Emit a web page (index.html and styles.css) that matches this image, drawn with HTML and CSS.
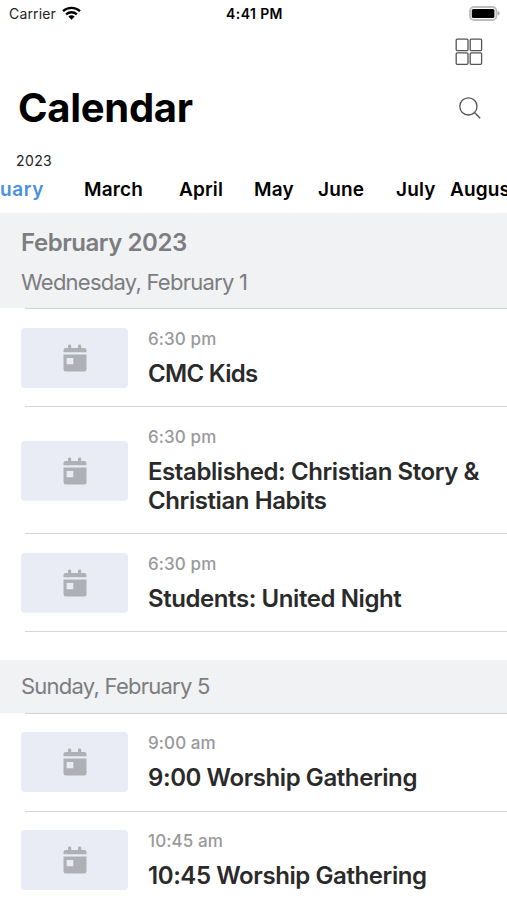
FILE: index.html
```html
<!DOCTYPE html>
<html lang="en">
<head>
<meta charset="utf-8">
<title>Calendar</title>
<link rel="stylesheet" href="styles.css">
</head>
<body>
<svg class="defs" width="0" height="0" aria-hidden="true">
  <symbol id="cal" viewBox="0 0 24 28">
    <path d="M0.5 8.3V6.2Q0.5 4 2.7 4H5V1.8Q5 .6 6.6 .6T8.2 1.8V4H15V1.8Q15 .6 16.6 .6T18.2 1.8V4H21.3Q23.5 4 23.5 6.2V8.3Z"/>
    <path fill-rule="evenodd" d="M.5 10.6H23.5V25.2Q23.5 27.4 21.3 27.4H2.7Q.5 27.4 .5 25.2ZM3.6 14V20.3H10.3V14Z"/>
  </symbol>
</svg>
<div class="status">
  <div class="network">
    <span class="carrier">Carrier</span>
    <svg class="wifi" width="19" height="14" viewBox="0 0 19 14"><g fill="none" stroke="#000" stroke-width="2.3"><path d="M1 5.2C5.7.7 13.3.7 18 5.2"/><path d="M4.1 8.4C7.2 5.5 11.8 5.5 14.9 8.4"/></g><path d="M6.3 10.6Q9.5 8 12.7 10.6L9.5 13.8Z"/></svg>
  </div>
  <span class="clock">4:41 PM</span>
  <svg class="battery" width="31" height="15" viewBox="0 0 31 15"><rect x="1" y="1" width="26.4" height="13" rx="4" fill="#fff" stroke="#bdbdbd" stroke-width="1.8"/><rect x="2.8" y="2.9" width="22.6" height="9.2" rx="1.6"/><path d="M28.6 5Q30.6 5.6 30.6 7.3T28.6 9.6Z" fill="#aaa"/></svg>
</div>
<div class="toolbar">
  <svg width="28" height="28" viewBox="0 0 28 28" fill="none" stroke="#555" stroke-width="1.3"><rect x="1.2" y="1.2" width="11.8" height="11.4" rx="1"/><rect x="15.2" y="1.2" width="11.4" height="11.4" rx="1"/><rect x="1.2" y="14.9" width="11.8" height="11.4" rx="1"/><rect x="15.2" y="14.9" width="11.4" height="11.4" rx="1"/></svg>
</div>
<div class="heading">
  <h1>Calendar</h1>
  <svg width="22" height="22" viewBox="0 0 22 22" fill="none" stroke="#555" stroke-width="1.3"><circle cx="9.4" cy="9.4" r="8.6"/><path d="M15.5 15.5L21.2 21.2"/></svg>
</div>
<div class="year"><span>2023</span></div>
<div class="months">
  <span class="active">February</span><span>March</span><span>April</span><span>May</span><span>June</span><span>July</span><span>August</span>
</div>
<section class="opening">
  <div class="band first">
    <h2>February 2023</h2>
    <p>Wednesday, February 1</p>
  </div>
  <div class="event">
    <div class="thumb"><svg width="24" height="28"><use href="#cal"/></svg></div>
    <div class="info"><span class="time">6:30 pm</span><span class="title tight">CMC Kids</span></div>
  </div>
  <div class="event">
    <div class="thumb"><svg width="24" height="28"><use href="#cal"/></svg></div>
    <div class="info"><span class="time">6:30 pm</span><span class="title">Established: Christian Story &amp;<br>Christian Habits</span></div>
  </div>
  <div class="event">
    <div class="thumb"><svg width="24" height="28"><use href="#cal"/></svg></div>
    <div class="info"><span class="time">6:30 pm</span><span class="title">Students: United Night</span></div>
  </div>
</section>
<section class="later">
  <div class="band">
    <p>Sunday, February 5</p>
  </div>
  <div class="event">
    <div class="thumb"><svg width="24" height="28"><use href="#cal"/></svg></div>
    <div class="info"><span class="time">9:00 am</span><span class="title">9:00 Worship Gathering</span></div>
  </div>
  <div class="event">
    <div class="thumb"><svg width="24" height="28"><use href="#cal"/></svg></div>
    <div class="info"><span class="time">10:45 am</span><span class="title">10:45 Worship Gathering</span></div>
  </div>
</section>
</body>
</html>
```

FILE: styles.css
```css
* { box-sizing: border-box; margin: 0; padding: 0; }
body { height: 900px; overflow: hidden; background: #fff; color: #000; font-family: Inter, "Liberation Sans", sans-serif; white-space: nowrap; }
svg { display: block; flex: none; }
.defs { position: absolute; }

.status { display: grid; grid-template-columns: 1fr auto 1fr; height: 27px; align-items: center; padding: 0 7px 0 9px; font-size: 14px; }
.network { display: flex; align-items: center; gap: 6px; }
.carrier { letter-spacing: .15px; color: #222; }
.clock { font-weight: 600; letter-spacing: .4px; }
.wifi { margin-top: -2px; }
.battery { justify-self: end; margin-top: -1px; }

.toolbar { display: flex; justify-content: flex-end; height: 49px; padding: 11px 24px 0 0; }
.heading { display: flex; justify-content: space-between; align-items: center; height: 64px; padding: 0 26px 0 18px; }
h1 { font-size: 40px; font-weight: 700; line-height: 64px; letter-spacing: -.3px; }

.year { height: 38px; padding: 10px 0 0 16px; font-size: 14px; line-height: 21px; letter-spacing: .4px; color: #222; }
.months { display: grid; grid-template-columns: 84px 95px 75px 64px 78px 54px auto; height: 35px; font-size: 19px; font-weight: 600; line-height: 24px; letter-spacing: .15px; }
.months .active { justify-self: end; padding-right: 40px; letter-spacing: .6px; color: #4a90e2; }

.band { display: flex; flex-direction: column; justify-content: center; height: 53px; padding-left: 21px; background: #f1f2f4; color: #7c7d80; }
.band.first { height: 95px; padding-top: 4px; }
h2 { font-size: 24px; font-weight: 600; line-height: 39px; letter-spacing: -.45px; }
.band p { font-size: 22px; line-height: 40px; letter-spacing: -.75px; }

.event { display: flex; align-items: center; gap: 20px; margin-left: 25px; padding: 19px 0; border-bottom: 1px solid #d5d6d8; }
.band + .event { border-top: 1px solid #d2d3d5; }
.thumb { display: flex; align-items: center; justify-content: center; width: 107px; height: 60px; margin: -1px 0 -1px -4px; border-radius: 4px; background: #e9ecf4; color: #aeb0b5; fill: currentColor; }
.info { display: flex; flex-direction: column; gap: 10px; }
.time { font-size: 17px; font-weight: 500; line-height: 20px; letter-spacing: .1px; color: #98999b; }
.title { font-size: 24px; font-weight: 600; line-height: 29px; letter-spacing: -.42px; color: #2a2a2a; }
.title.tight { letter-spacing: -.7px; }
.opening .event { padding-bottom: 18px; }
.opening .info { padding-top: 1px; }
.later { margin-top: 27.5px; }
```
